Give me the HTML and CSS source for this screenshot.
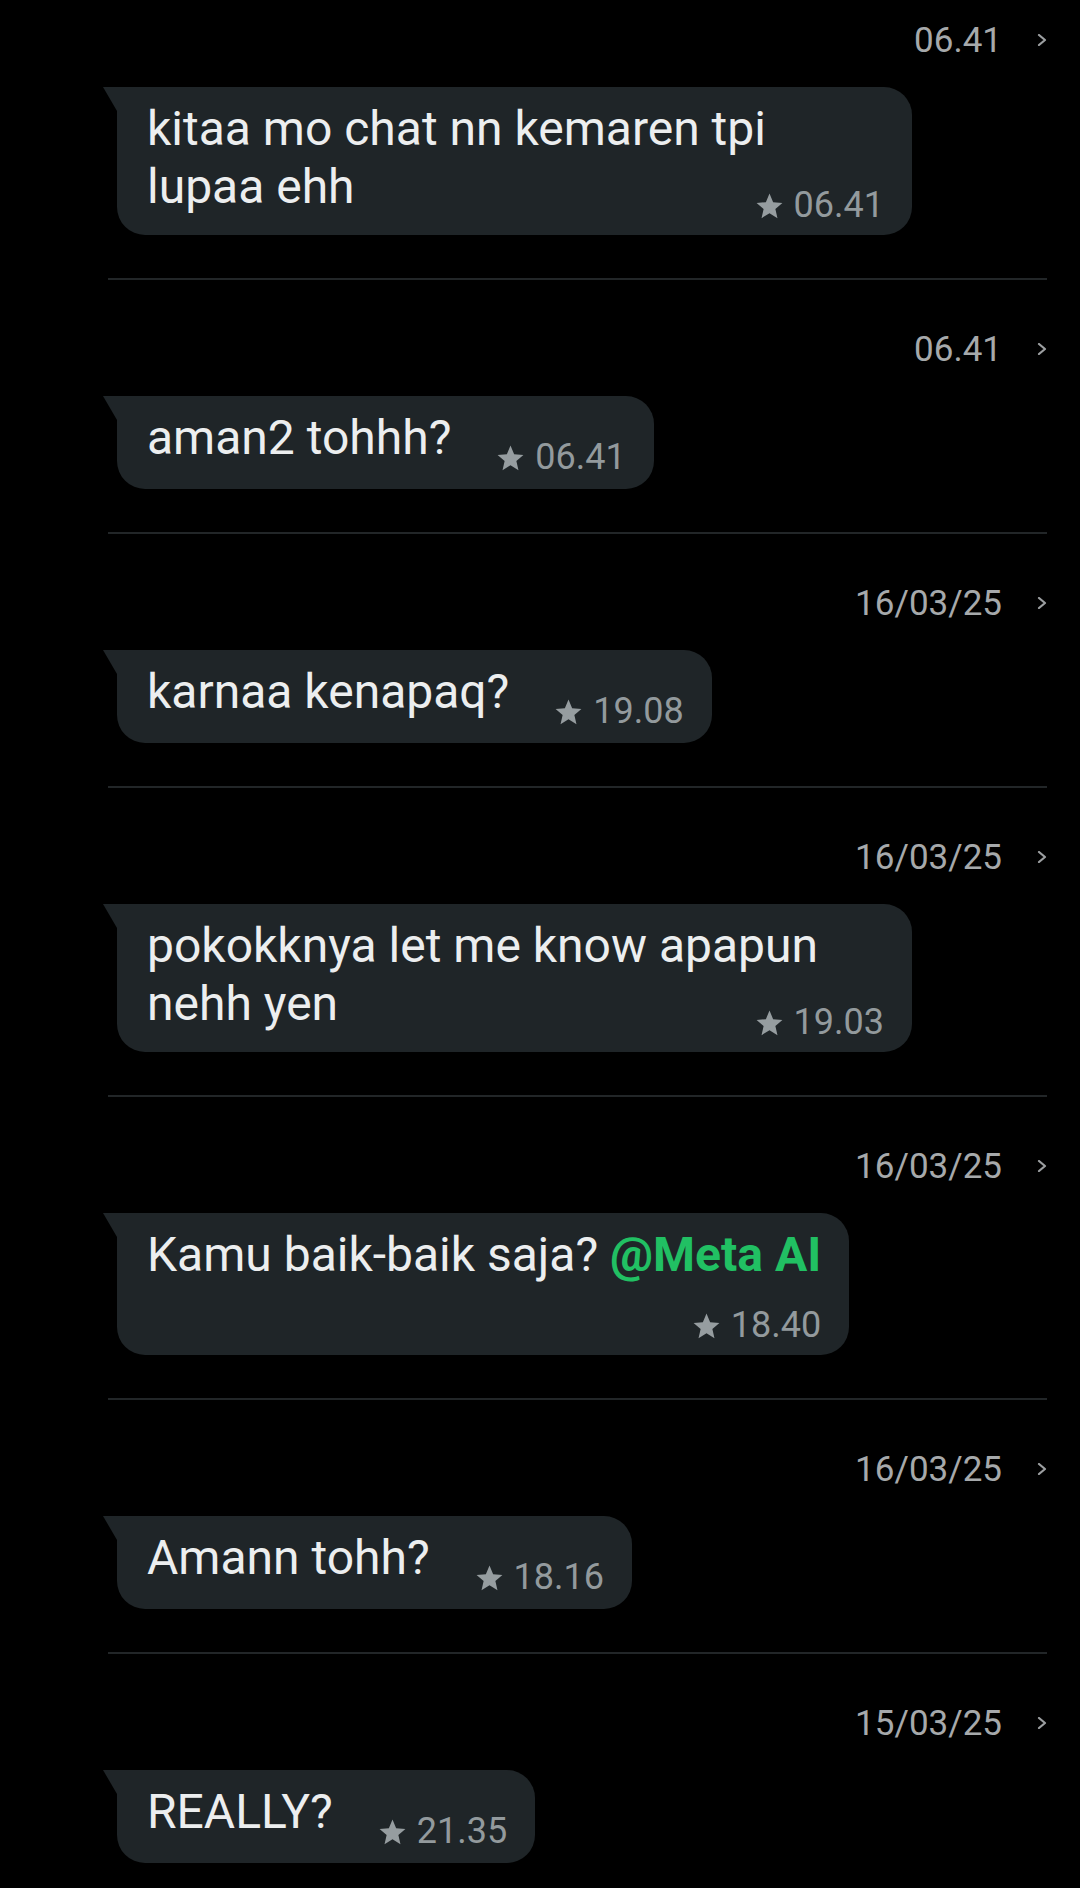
FILE: index.html
```html
<!DOCTYPE html>
<html lang="en">
<head>
    <meta charset="UTF-8">
    <meta name="viewport" content="width=device-width, initial-scale=1.0">
    <title>Pesan berbintang</title>
    <link rel="stylesheet" href="styles.css">
</head>
<body>
    <div class="list">
        <div class="item first">
            <div class="head"><span class="date">06.41</span><svg class="chev" viewBox="0 0 10 12"><path d="M2 1l6 5-6 5"/></svg></div>
            <div class="bubble wide">
                <p class="text">kitaa mo chat nn kemaren tpi<br>lupaa ehh</p>
                <div class="meta pull"><svg class="star" viewBox="0 0 24 24"><path d="M12 17.27L18.18 21l-1.64-7.03L22 9.24l-7.19-.61L12 2 9.19 8.63 2 9.24l5.46 4.73L5.82 21z"/></svg>06.41</div>
            </div>
        </div>

        <div class="item">
            <div class="head"><span class="date">06.41</span><svg class="chev" viewBox="0 0 10 12"><path d="M2 1l6 5-6 5"/></svg></div>
            <div class="bubble row">
                <p class="text">aman2 tohhh?</p>
                <div class="meta"><svg class="star" viewBox="0 0 24 24"><path d="M12 17.27L18.18 21l-1.64-7.03L22 9.24l-7.19-.61L12 2 9.19 8.63 2 9.24l5.46 4.73L5.82 21z"/></svg>06.41</div>
            </div>
        </div>

        <div class="item">
            <div class="head"><span class="date">16/03/25</span><svg class="chev" viewBox="0 0 10 12"><path d="M2 1l6 5-6 5"/></svg></div>
            <div class="bubble row">
                <p class="text">karnaa kenapaq?</p>
                <div class="meta"><svg class="star" viewBox="0 0 24 24"><path d="M12 17.27L18.18 21l-1.64-7.03L22 9.24l-7.19-.61L12 2 9.19 8.63 2 9.24l5.46 4.73L5.82 21z"/></svg>19.08</div>
            </div>
        </div>

        <div class="item">
            <div class="head"><span class="date">16/03/25</span><svg class="chev" viewBox="0 0 10 12"><path d="M2 1l6 5-6 5"/></svg></div>
            <div class="bubble wide">
                <p class="text">pokokknya let me know apapun<br>nehh yen</p>
                <div class="meta pull"><svg class="star" viewBox="0 0 24 24"><path d="M12 17.27L18.18 21l-1.64-7.03L22 9.24l-7.19-.61L12 2 9.19 8.63 2 9.24l5.46 4.73L5.82 21z"/></svg>19.03</div>
            </div>
        </div>

        <div class="item">
            <div class="head"><span class="date">16/03/25</span><svg class="chev" viewBox="0 0 10 12"><path d="M2 1l6 5-6 5"/></svg></div>
            <div class="bubble">
                <p class="text">Kamu baik-baik saja? <span class="mention">@Meta AI</span></p>
                <div class="meta below"><svg class="star" viewBox="0 0 24 24"><path d="M12 17.27L18.18 21l-1.64-7.03L22 9.24l-7.19-.61L12 2 9.19 8.63 2 9.24l5.46 4.73L5.82 21z"/></svg>18.40</div>
            </div>
        </div>

        <div class="item">
            <div class="head"><span class="date">16/03/25</span><svg class="chev" viewBox="0 0 10 12"><path d="M2 1l6 5-6 5"/></svg></div>
            <div class="bubble row">
                <p class="text">Amann tohh?</p>
                <div class="meta"><svg class="star" viewBox="0 0 24 24"><path d="M12 17.27L18.18 21l-1.64-7.03L22 9.24l-7.19-.61L12 2 9.19 8.63 2 9.24l5.46 4.73L5.82 21z"/></svg>18.16</div>
            </div>
        </div>

        <div class="item">
            <div class="head"><span class="date">15/03/25</span><svg class="chev" viewBox="0 0 10 12"><path d="M2 1l6 5-6 5"/></svg></div>
            <div class="bubble row">
                <p class="text">REALLY?</p>
                <div class="meta"><svg class="star" viewBox="0 0 24 24"><path d="M12 17.27L18.18 21l-1.64-7.03L22 9.24l-7.19-.61L12 2 9.19 8.63 2 9.24l5.46 4.73L5.82 21z"/></svg>21.35</div>
            </div>
        </div>
    </div>
</body>
</html>
```

FILE: styles.css
```css
body { margin: 0; background: #000; font-family: Roboto, "Noto Sans", sans-serif; color: #eceeef; }
.list { padding: 0 33px 0 108px; }
.item { border-top: 2px solid #222628; padding: 45px 0 43px; }
.item.first { border-top: none; padding-top: 16px; }
.head { display: flex; justify-content: flex-end; align-items: center; height: 48px; margin-bottom: 23px; }
.date { font-size: 35px; color: #a6a9ab; }
.chev { width: 10px; height: 12px; margin-left: 35px; fill: none; stroke: #9c9fa1; stroke-width: 2.2; stroke-linecap: round; stroke-linejoin: round; }

.bubble { position: relative; margin-left: 9px; width: fit-content; max-width: 796px; box-sizing: border-box; background: #1f2528; border-radius: 0 28px 28px 28px; padding: 13px 28px 10px 30px; display: flex; flex-direction: column; }
.bubble::before { content: ""; position: absolute; left: -14px; top: 0; width: 14px; height: 24px; background: #1f2528; clip-path: polygon(0 0, 100% 0, 100% 100%); }
.bubble.wide { width: 795px; }
.bubble.row { flex-direction: row; align-items: flex-start; padding-bottom: 12px; }

.text { margin: 0; font-size: 48px; line-height: 58px; max-width: 700px; }
.mention { color: #21c063; font-weight: bold; }

.meta { display: flex; align-items: center; align-self: flex-end; font-size: 36px; line-height: 40px; color: #939a9d; }
.row .meta { align-self: flex-start; margin: 28px 0 0 44px; }
.meta.pull { margin-top: -31px; }
.meta.below { margin-top: 21px; }
.star { width: 31px; height: 31px; fill: #969da0; margin: 2px 9px 0 0; }
```
